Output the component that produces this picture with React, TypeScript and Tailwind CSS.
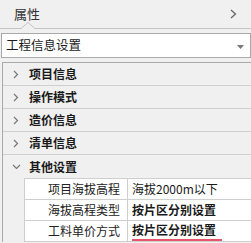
import React from "react";

const groups = ["项目信息", "操作模式", "造价信息", "清单信息"];

const props = [
  { name: "项目海拔高程", value: "海拔2000m以下", bold: false },
  { name: "海拔高程类型", value: "按片区分别设置", bold: true },
  { name: "工料单价方式", value: "按片区分别设置", bold: true, mark: true },
];

const Chevron = ({ open }: { open?: boolean }) =>
  open ? (
    <svg width="9" height="6" viewBox="0 0 9 6" className="block">
      <path d="M1 1 L4.5 4.5 L8 1" fill="none" stroke="#777" strokeWidth="1.2" />
    </svg>
  ) : (
    <svg width="6" height="9" viewBox="0 0 6 9" className="block">
      <path d="M1 1 L4.5 4.5 L1 8" fill="none" stroke="#777" strokeWidth="1.2" />
    </svg>
  );

export default function App() {
  return (
    <div
      className="w-[251px] h-[243px] overflow-hidden bg-[#f0f0f0] text-[12px] text-[#1a1a1a]"
      style={{ fontFamily: '"Noto Sans CJK SC", "Noto Sans", sans-serif' }}
    >
      {/* header */}
      <div className="relative h-[29px] flex items-center border-b border-[#c4c4c4]">
        <span className="pl-[14px] text-[13px] text-[#333]">属性</span>
        <svg width="9" height="14" viewBox="0 0 9 14" className="absolute right-[13px] top-[7px]">
          <path d="M2 3 L6.5 7 L2 11" fill="none" stroke="#666" strokeWidth="1.3" />
        </svg>
        <svg width="14" height="7" viewBox="0 0 14 7" className="absolute left-[21px] bottom-[-1px]">
          <path d="M0 6.5 L7 0.5 L14 6.5" fill="#f0f0f0" stroke="#c4c4c4" strokeWidth="1" />
          <rect x="1" y="6" width="12" height="1" fill="#f0f0f0" />
        </svg>
      </div>

      {/* dropdown */}
      <div className="mt-[4px] ml-[1px] h-[25px] flex items-center justify-between bg-white border border-[#a9a9a9]">
        <span className="pl-[4px] text-[12.5px]">工程信息设置</span>
        <svg width="7" height="4" viewBox="0 0 7 4" className="mr-[6px] mt-[3px]">
          <path d="M0 0 L7 0 L3.5 4 Z" fill="#777" />
        </svg>
      </div>

      {/* property panel */}
      <div className="mt-[4px] ml-[2px] border-l border-t border-[#a9a9a9]">
        {groups.map((g) => (
          <div key={g} className="h-[23px] flex items-center border-b border-[#cfcfcf]">
            <div className="w-[26px] flex justify-center">
              <Chevron />
            </div>
            <span className="font-semibold">{g}</span>
          </div>
        ))}
        <div className="h-[23px] flex items-center">
          <div className="w-[26px] flex justify-center pl-[1px]">
            <Chevron open />
          </div>
          <span className="font-semibold">其他设置</span>
        </div>
        <div className="ml-[21px] border-l border-t border-[#cfcfcf] bg-white">
          {props.map((p) => (
            <div key={p.name} className="h-[21px] flex border-b border-[#cfcfcf]">
              <div className="w-[103px] flex items-center justify-end pr-[7px] border-r border-[#cfcfcf] text-[#222]">
                {p.name}
              </div>
              <div className="flex-1 flex items-center pl-[4px]">
                <span
                  className={
                    (p.bold ? "font-semibold " : "") +
                    (p.mark ? "pr-[6px] border-b-2 border-[#e8546c] leading-[18px]" : "")
                  }
                >
                  {p.value}
                </span>
              </div>
            </div>
          ))}
        </div>
      </div>
    </div>
  );
}
